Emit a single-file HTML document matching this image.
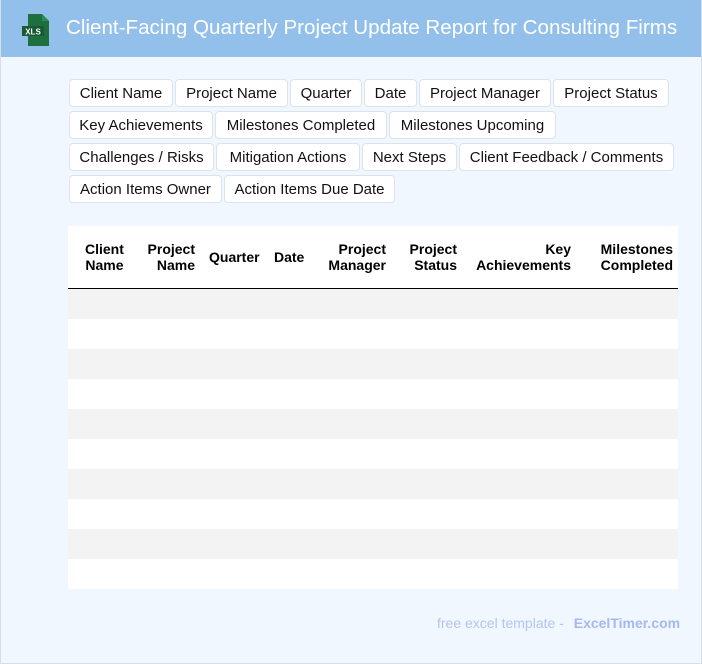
<!DOCTYPE html>
<html><head><meta charset="utf-8"><style>
*{margin:0;padding:0;box-sizing:border-box}
body{width:702px;height:664px;background:#f0f7ff;font-family:"Liberation Sans",Arial,sans-serif;position:relative;overflow:hidden}
.frame{position:absolute;left:0;top:0;width:702px;height:664px;border:1px solid #d5dfea;border-top:none}
.hdr{position:absolute;left:0;top:0;width:702px;height:57px;background:#93c0eb}
.hdr h1{position:absolute;left:66px;top:16px;font-size:20.6px;font-weight:normal;color:#fff;white-space:nowrap}
.tag{position:absolute;height:28px;background:#fff;border:1px solid #dbe4ee;border-radius:4px;font-size:15px;color:#111;text-align:center;line-height:28px;white-space:nowrap}
.tbl{position:absolute;left:68px;top:226px;width:610px;height:363px;background:#fff}
.th{position:absolute;font-size:14px;font-weight:bold;color:#000;line-height:16px;text-align:right;white-space:nowrap}
.line{position:absolute;left:0;top:62px;width:610px;height:1.5px;background:#000}
.row{position:absolute;left:0;width:610px;height:30px}
.foot{position:absolute;top:615px;left:437px;font-size:14px;color:#b4c4f2;white-space:nowrap}
.foot b{color:#a6b8f0;margin-left:6px}
</style></head><body>
<div class="hdr">
<svg style="position:absolute;left:20px;top:13px" width="32" height="34" viewBox="0 0 32 34">
<path d="M8 1h14l7 7v25H8z" fill="#1e6f3f"/><path d="M22 1v7h7z" fill="#2e8b57"/>
<rect x="2" y="13" width="22" height="10" fill="#185a33"/>
<text x="13" y="21.5" font-size="8" font-family="Liberation Sans" font-weight="bold" fill="#fff" text-anchor="middle">XLS</text>
</svg>
<h1>Client-Facing Quarterly Project Update Report for Consulting Firms</h1>
</div>
<div class="tag" style="left:69px;top:79px;width:104px">Client Name</div>
<div class="tag" style="left:175px;top:79px;width:113px">Project Name</div>
<div class="tag" style="left:290px;top:79px;width:72px">Quarter</div>
<div class="tag" style="left:364px;top:79px;width:53px">Date</div>
<div class="tag" style="left:419px;top:79px;width:132px">Project Manager</div>
<div class="tag" style="left:553px;top:79px;width:116px">Project Status</div>
<div class="tag" style="left:69px;top:111px;width:144px">Key Achievements</div>
<div class="tag" style="left:215px;top:111px;width:172px">Milestones Completed</div>
<div class="tag" style="left:389px;top:111px;width:167px">Milestones Upcoming</div>
<div class="tag" style="left:69px;top:143px;width:145px">Challenges / Risks</div>
<div class="tag" style="left:216px;top:143px;width:144px">Mitigation Actions</div>
<div class="tag" style="left:362px;top:143px;width:95px">Next Steps</div>
<div class="tag" style="left:459px;top:143px;width:215px">Client Feedback / Comments</div>
<div class="tag" style="left:69px;top:175px;width:153px">Action Items Owner</div>
<div class="tag" style="left:224px;top:175px;width:171px">Action Items Due Date</div>
<div class="tbl">
<div class="th" style="left:17px;top:15px;text-align:center">Client<br>Name</div>
<div class="th" style="right:483px;top:15px">Project<br>Name</div>
<div class="th" style="left:141px;top:23px">Quarter</div>
<div class="th" style="left:206px;top:23px">Date</div>
<div class="th" style="right:292px;top:15px">Project<br>Manager</div>
<div class="th" style="right:221px;top:15px">Project<br>Status</div>
<div class="th" style="right:107px;top:15px">Key<br>Achievements</div>
<div class="th" style="right:5px;top:15px">Milestones<br>Completed</div>
<div class="line"></div>
<div class="row" style="top:63px;background:#f3f3f3"></div>
<div class="row" style="top:123px;background:#f3f3f3"></div>
<div class="row" style="top:183px;background:#f3f3f3"></div>
<div class="row" style="top:243px;background:#f3f3f3"></div>
<div class="row" style="top:303px;background:#f3f3f3"></div>
</div>
<div class="foot">free excel template - <b>ExcelTimer.com</b></div>
<div class="frame"></div>
</body></html>
